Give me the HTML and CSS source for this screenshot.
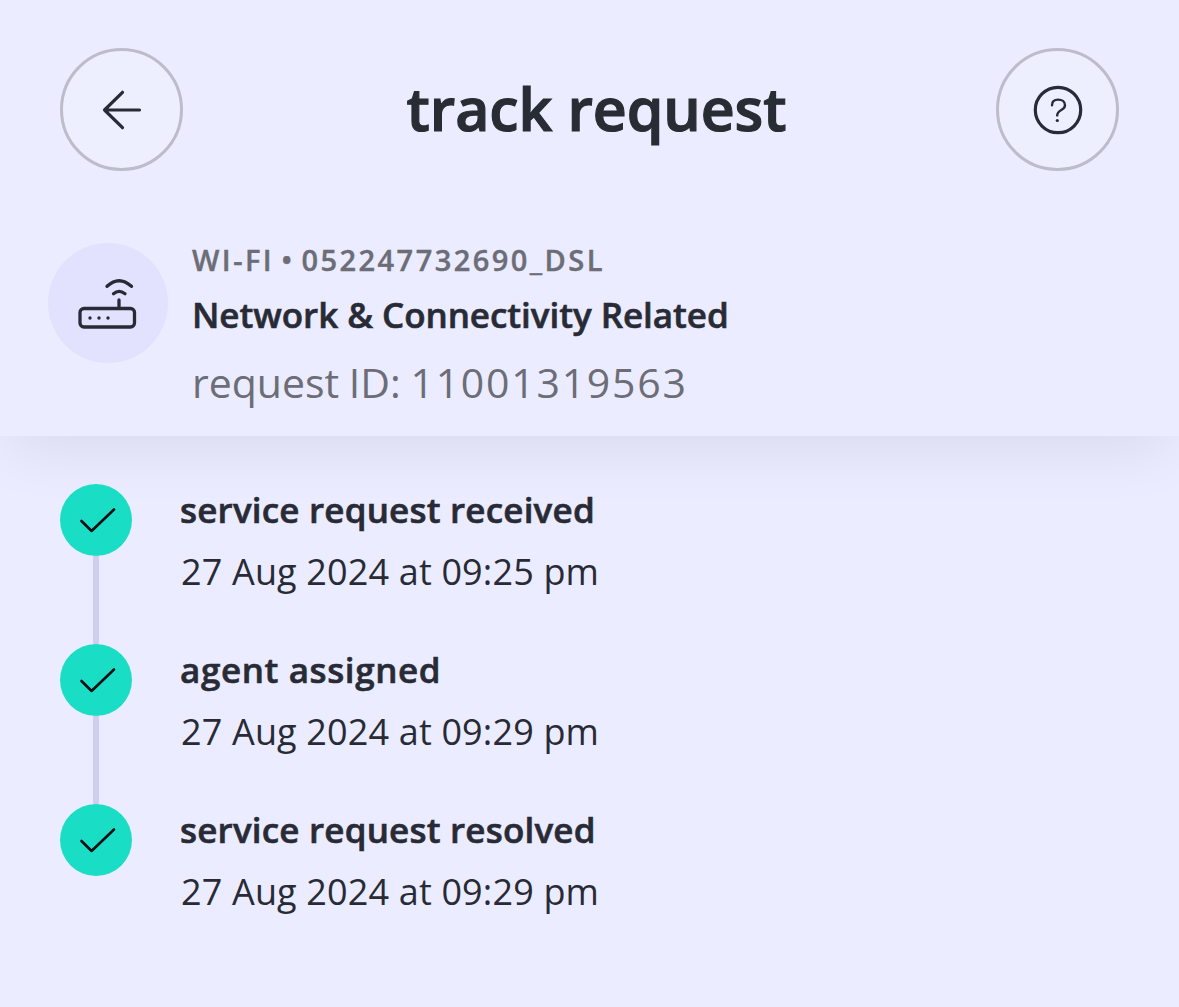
FILE: index.html
```
<!DOCTYPE html>
<html lang="en">
<head>
<meta charset="utf-8">
<title>Track request</title>
<link rel="stylesheet" href="styles.css">
</head>
<body>
<header class="header">
  <div class="topbar">
    <button class="round-button" aria-label="Back">
      <svg width="123" height="123" viewBox="0 0 123 123" fill="none" stroke="#282b35" stroke-width="3.2" stroke-linecap="round" stroke-linejoin="round"><path d="M79.5 62H44.5M62.5 44.3L44.5 62L62.5 79.7"/></svg>
    </button>
    <h1 class="title">track request</h1>
    <button class="round-button" aria-label="Help">
      <svg width="123" height="123" viewBox="0 0 123 123" fill="none" stroke="#282b35" stroke-linecap="round"><circle cx="62" cy="62" r="22.7" stroke-width="3.2"/><path d="M56 57.2C56 53.2 58.7 51.6 62.2 51.6S69 53.6 69 57.2C69 62.7 61.2 61.2 61.2 67.4" stroke-width="2.4"/><circle cx="61.3" cy="72.5" r="1.6" fill="#282b35" stroke="none"/></svg>
    </button>
  </div>
  <section class="request">
    <div class="device">
      <svg width="120" height="120" viewBox="0 0 120 120" fill="none" stroke="#282b35" stroke-width="3.3" stroke-linecap="round"><rect x="32" y="65.5" width="54.5" height="18.5" rx="4"/><path d="M71 57V65M59 43.3Q71 32 83.5 43.3M65.5 50.7Q71 46 77 50.7"/><g fill="#282b35" stroke="none"><circle cx="42" cy="75" r="1.7"/><circle cx="51" cy="75" r="1.7"/><circle cx="60" cy="75" r="1.7"/></g></svg>
    </div>
    <div class="request-text">
      <p class="line-id">WI-FI • 052247732690_DSL</p>
      <h2 class="topic">Network &amp; Connectivity Related</h2>
      <p class="request-id">request ID: <span class="number">11001319563</span></p>
    </div>
  </section>
</header>
<ol class="timeline">
  <li class="step">
    <div class="rail"><span class="check"><svg width="72" height="72" viewBox="0 0 72 72" class="tick"><path d="M21.5 37L31.6 47L54 25.5"/></svg></span><span class="connector"></span></div>
    <div class="step-text"><h3 class="step-title">service request received</h3><p class="step-time">27 Aug 2024 at 09:25 pm</p></div>
  </li>
  <li class="step">
    <div class="rail"><span class="check"><svg width="72" height="72" viewBox="0 0 72 72" class="tick"><path d="M21.5 37L31.6 47L54 25.5"/></svg></span><span class="connector"></span></div>
    <div class="step-text"><h3 class="step-title step-title-wide">agent assigned</h3><p class="step-time">27 Aug 2024 at 09:29 pm</p></div>
  </li>
  <li class="step">
    <div class="rail"><span class="check"><svg width="72" height="72" viewBox="0 0 72 72" class="tick"><path d="M21.5 37L31.6 47L54 25.5"/></svg></span></div>
    <div class="step-text"><h3 class="step-title">service request resolved</h3><p class="step-time">27 Aug 2024 at 09:29 pm</p></div>
  </li>
</ol>
</body>
</html>
```
FILE: styles.css
```
* { box-sizing: border-box; margin: 0; padding: 0; }
body {
  min-height: 1007px;
  background: #ebecff;
  color: #282b35;
  font-family: "Open Sans", "Noto Sans", sans-serif;
  white-space: nowrap;
}
svg { display: block; flex: none; }
.header {
  height: 436px;
  padding-top: 48px;
  background: #ebecff;
  box-shadow: 0 24px 56px -8px rgba(0, 0, 0, .07);
}
.topbar {
  display: flex;
  align-items: center;
  justify-content: space-between;
  padding: 0 60px;
}
.round-button {
  display: flex;
  align-items: center;
  justify-content: center;
  width: 123px;
  height: 123px;
  border: 3px solid #bdbccb;
  border-radius: 50%;
  background: #edefff;
}
.title {
  padding-left: 14px;
  margin-top: -4px;
  font-size: 59px;
  line-height: 60px;
  font-weight: 600;
  letter-spacing: -.1px;
  -webkit-text-stroke: 1.2px #282c33;
  color: #282c33;
}
.request {
  display: flex;
  gap: 24px;
  margin-top: 72px;
  padding-left: 48px;
}
.device {
  width: 120px;
  height: 120px;
  border-radius: 50%;
  background: #e2e2ff;
}
.request-text { margin-top: -3px; color: #6c6d76; }
.line-id { font-size: 29px; line-height: 39px; font-weight: 600; letter-spacing: 2.45px; word-spacing: -3px; -webkit-text-stroke: .4px #6c6d76; }
.topic { font-size: 35px; line-height: 71px; font-weight: 600; letter-spacing: -.05px; -webkit-text-stroke: .6px #282b35; color: #282b35; }
.request-id { font-size: 41px; line-height: 64px; word-spacing: -1px; }
.number { letter-spacing: 1.75px; }
.timeline { padding: 48px 60px 0; list-style: none; }
.step { display: flex; gap: 48px; height: 160px; }
.rail { display: flex; flex-direction: column; align-items: center; width: 72px; }
.check { width: 72px; height: 72px; border-radius: 50%; background: #19dec5; }
.tick { fill: none; stroke: #080d12; stroke-width: 2.6px; stroke-linecap: round; stroke-linejoin: round; }
.connector { flex: 1; width: 6px; background: #cfcef0; }
.step-text { padding-top: 1px; }
.step-title { font-size: 35px; line-height: 49px; font-weight: 600; letter-spacing: .2px; -webkit-text-stroke: .6px #282b35; }
.step-title-wide { letter-spacing: .6px; }
.step-time { padding-left: 1px; font-size: 36px; line-height: 75px; letter-spacing: .15px; }
```
